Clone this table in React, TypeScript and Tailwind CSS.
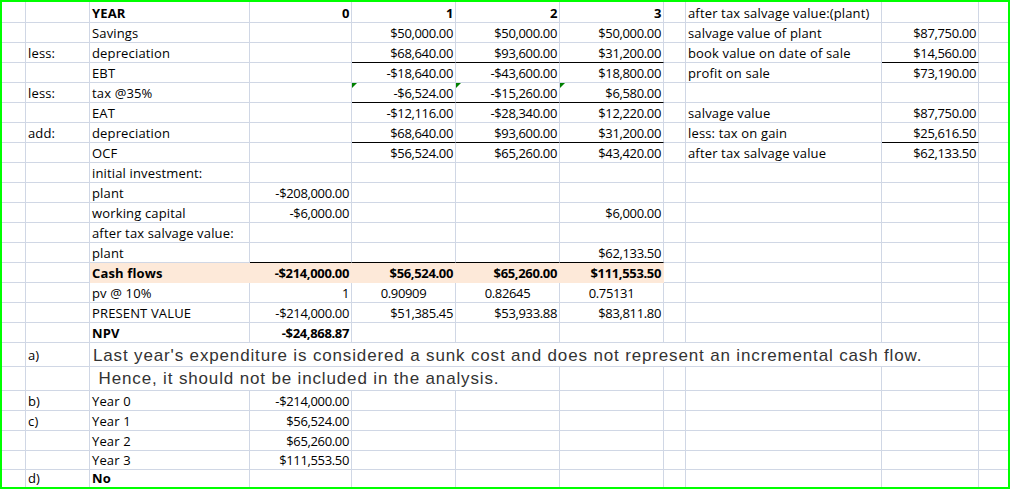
import clsx from 'clsx'

type CellSpec = {
  t?: string
  a?: 'r' | 'c'
  b?: boolean
  n?: boolean
  line?: boolean
  fill?: boolean
  tri?: boolean
  big?: boolean
  span?: 4 | 8
  pb?: 1 | 2
}

type Row = { h: string; cells: CellSpec[]; last?: boolean }

const _: CellSpec = {}
const t = (s: string, o: Partial<CellSpec> = {}): CellSpec => ({ t: s, ...o })
const m = (s: string, o: Partial<CellSpec> = {}): CellSpec => ({ t: s, a: 'r', n: true, ...o })
const ln: CellSpec = { line: true }

// pad a row out to the 11 sheet columns (A..K)
const pad = (cells: CellSpec[]) => [...cells, ...Array(11 - cells.length).fill(_)]

const rows: Row[] = [
  { h: 'h-[21px]', cells: [_, _, t('YEAR', { b: true }), m('0', { b: true }), m('1', { b: true }), m('2', { b: true }), m('3', { b: true }), _, t('after tax salvage value:(plant)'), _, _] },
  { h: 'h-[20px]', cells: [_, _, t('Savings'), _, m('$50,000.00'), m('$50,000.00'), m('$50,000.00'), _, t('salvage value of plant'), m('$87,750.00'), _] },
  { h: 'h-[20px]', cells: [_, t('less:'), t('depreciation'), _, m('$68,640.00', { line: true }), m('$93,600.00', { line: true }), m('$31,200.00', { line: true }), _, t('book value on date of sale'), m('$14,560.00', { line: true }), _] },
  { h: 'h-[20px]', cells: [_, _, t('EBT'), _, m('-$18,640.00'), m('-$43,600.00'), m('$18,800.00'), _, t('profit on sale'), m('$73,190.00'), _] },
  { h: 'h-[20px]', cells: pad([_, t('less:'), t('tax @35%'), _, m('-$6,524.00', { line: true, tri: true }), m('-$15,260.00', { line: true, tri: true }), m('$6,580.00', { line: true, tri: true })]) },
  { h: 'h-[20px]', cells: [_, _, t('EAT'), _, m('-$12,116.00'), m('-$28,340.00'), m('$12,220.00'), _, t('salvage value'), m('$87,750.00'), _] },
  { h: 'h-[20px]', cells: [_, t('add:'), t('depreciation'), _, m('$68,640.00', { line: true }), m('$93,600.00', { line: true }), m('$31,200.00', { line: true }), _, t('less: tax on gain'), m('$25,616.50', { line: true }), _] },
  { h: 'h-[20px]', cells: [_, _, t('OCF'), _, m('$56,524.00'), m('$65,260.00'), m('$43,420.00'), _, t('after tax salvage value'), m('$62,133.50'), _] },
  { h: 'h-[20px]', cells: pad([_, _, t('initial investment:')]) },
  { h: 'h-[20px]', cells: pad([_, _, t('plant'), m('-$208,000.00')]) },
  { h: 'h-[20px]', cells: pad([_, _, t('working capital'), m('-$6,000.00'), _, _, m('$6,000.00')]) },
  { h: 'h-[20px]', cells: pad([_, _, t('after tax salvage value:')]) },
  { h: 'h-[20px]', cells: pad([_, _, t('plant'), ln, ln, ln, m('$62,133.50', { line: true })]) },
  { h: 'h-[20px]', cells: pad([_, _, t('Cash flows', { b: true, fill: true }), m('-$214,000.00', { b: true, fill: true }), m('$56,524.00', { b: true, fill: true }), m('$65,260.00', { b: true, fill: true }), m('$111,553.50', { b: true, fill: true })]) },
  { h: 'h-[20px]', cells: pad([_, _, t('pv @ 10%'), m('1'), m('0.90909', { a: 'c' }), m('0.82645', { a: 'c' }), m('0.75131', { a: 'c' })]) },
  { h: 'h-[20px]', cells: pad([_, _, t('PRESENT VALUE'), m('-$214,000.00'), m('$51,385.45'), m('$53,933.88'), m('$83,811.80')]) },
  { h: 'h-[20px]', cells: pad([_, _, t('NPV', { b: true }), m('-$24,868.87', { b: true })]) },
  {
    h: 'h-[24px]',
    cells: [_, t('a)', { pb: 2 }), t("Last year's expenditure is considered a sunk cost and does not represent an incremental cash flow.", { big: true, span: 8, pb: 1 }), _],
  },
  {
    h: 'h-[24px]',
    cells: pad([_, _, t(' Hence, it should not be included in the analysis.', { big: true, span: 4, pb: 2 })]).slice(0, 8),
  },
  { h: 'h-[20px]', cells: pad([_, t('b)'), t('Year 0'), m('-$214,000.00')]) },
  { h: 'h-[20px]', cells: pad([_, t('c)'), t('Year 1'), m('$56,524.00')]) },
  { h: 'h-[20px]', cells: pad([_, _, t('Year 2'), m('$65,260.00')]) },
  { h: 'h-[16px]', cells: pad([_, _, t('Year 3'), m('$111,553.50')]) },
  { h: 'h-[20px]', cells: pad([_, t('d)'), t('No', { b: true })]), last: true },
]

function Cell({ c, edge, bottom }: { c: CellSpec; edge: boolean; bottom: boolean }) {
  return (
    <div
      className={clsx(
        'relative flex items-end whitespace-pre border-r border-b',
        c.fill ? 'border-[#fde9d9] bg-[#fde9d9]' : 'border-[#d0d7e5]',
        c.line && 'border-b-black',
        edge && 'border-r-0',
        bottom && 'border-b-0',
        c.span === 8 && 'col-span-8',
        c.span === 4 && 'col-span-4',
        c.pb === 1 && 'pb-px',
        c.pb === 2 && 'pb-[2px]',
        c.a === 'r' && 'justify-end',
        c.a === 'c' && 'justify-center',
        c.big
          ? "pl-[3px] font-['Liberation_Sans',Arial,sans-serif] text-[17px] leading-[19px] tracking-[0.85px] text-[#333]"
          : 'px-[2px] leading-[18px]',
        !c.big && (c.n ? 'tracking-[-0.35px]' : 'tracking-[0.15px]'),
        c.b && 'font-bold',
      )}
    >
      {c.tri && (
        <span className="absolute left-0 top-0 h-0 w-0 border-t-[5px] border-r-[5px] border-t-[#008000] border-r-transparent" />
      )}
      {c.t}
    </div>
  )
}

export default function App() {
  return (
    <div className="flex h-[489px] w-[1010px] flex-col overflow-hidden border-2 border-[#00ff00] bg-white font-['Open_Sans',sans-serif] text-[13px] text-black">
      {rows.map((row, r) => (
        <div
          key={r}
          className={clsx(
            'grid shrink-0 grid-cols-[24px_64px_160px_102px_104px_104px_104px_22px_196px_97px_29px]',
            row.h,
          )}
        >
          {row.cells.map((c, i) => (
            <Cell key={i} c={c} edge={i === row.cells.length - 1} bottom={!!row.last} />
          ))}
        </div>
      ))}
    </div>
  )
}
